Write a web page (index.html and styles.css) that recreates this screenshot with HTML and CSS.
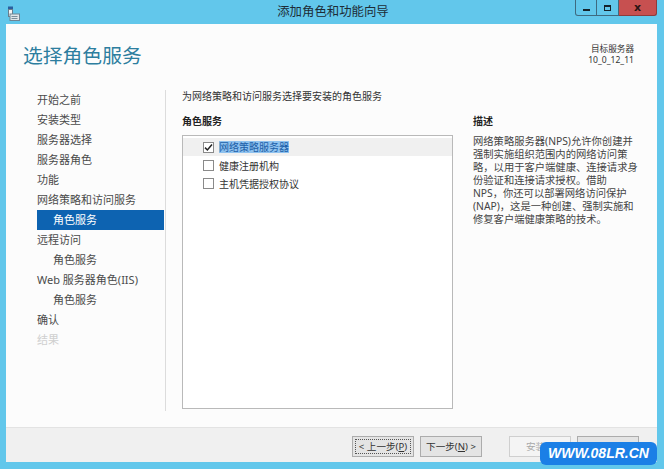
FILE: index.html
```html
<!DOCTYPE html>
<html>
    <head>
        <title>添加角色和功能向导</title>
        <link rel="stylesheet" href="styles.css">
    </head>
    <body>
        <div class="janela">
            <div class="titulo">
                <div class="titulo-icone">
                    <svg width="13" height="15" viewBox="0 0 13 15">
                        <rect x="1" y="0.5" width="5" height="3" fill="#2a5f9e"/>
                        <rect x="1.5" y="3.5" width="4" height="7" fill="#f4f4f4" stroke="#6a7d8c" stroke-width="1"/>
                        <rect x="3" y="8" width="9.5" height="6.5" fill="#dfe6ea" stroke="#6f8594" stroke-width="1"/>
                        <rect x="4.5" y="10" width="6" height="1" fill="#7a8e9b"/>
                        <rect x="4.5" y="12" width="6" height="1" fill="#7a8e9b"/>
                    </svg>
                </div>
                <div class="titulo-texto">添加角色和功能向导</div>
                <div class="titulo-botoes">
                    <span class="wbtn minimizar"><i></i></span>
                    <span class="wbtn maximizar"><i></i></span>
                    <span class="wbtn fechar">x</span>
                </div>
            </div>
            <div class="cliente">
                <div class="cabecalho">
                    <h1>选择角色服务</h1>
                    <div class="destino">目标服务器<br>10_0_12_11</div>
                </div>
                <div class="principal">
                    <ul class="menu">
                        <li>开始之前</li>
                        <li>安装类型</li>
                        <li>服务器选择</li>
                        <li>服务器角色</li>
                        <li>功能</li>
                        <li>网络策略和访问服务</li>
                        <li class="sub ativo">角色服务</li>
                        <li>远程访问</li>
                        <li class="sub">角色服务</li>
                        <li>Web 服务器角色(IIS)</li>
                        <li class="sub">角色服务</li>
                        <li>确认</li>
                        <li class="desativado">结果</li>
                    </ul>
                    <div class="conteudo">
                        <p class="intro">为网络策略和访问服务选择要安装的角色服务</p>
                        <div class="colunas">
                            <div>
                                <h2>角色服务</h2>
                                <div class="lista">
                                    <div class="linha hover">
                                        <span class="caixa marcada">
                                            <svg width="9" height="9" viewBox="0 0 9 9"><path d="M1 4.6 L3.4 7 L8 1.6" fill="none" stroke="#222" stroke-width="1.5"/></svg>
                                        </span>
                                        <span class="selecionado">网络策略服务器</span>
                                    </div>
                                    <div class="linha"><span class="caixa"></span><span>健康注册机构</span></div>
                                    <div class="linha"><span class="caixa"></span><span>主机凭据授权协议</span></div>
                                </div>
                            </div>
                            <div>
                                <h2>描述</h2>
                                <p class="descricao">网络策略服务器(NPS)允许你创建并<br>强制实施组织范围内的网络访问策<br>略，以用于客户端健康、连接请求身<br>份验证和连接请求授权。借助<br>NPS，你还可以部署网络访问保护<br>(NAP)，这是一种创建、强制实施和<br>修复客户端健康策略的技术。</p>
                            </div>
                        </div>
                    </div>
                </div>
                <div class="rodape">
                    <button class="botao padrao"><span>&lt; 上一步(<u>P</u>)</span></button>
                    <button class="botao">下一步(<u>N</u>) &gt;</button>
                    <button class="botao desligado longe">安装(I)</button>
                    <button class="botao">取消</button>
                </div>
            </div>
            <div class="marca">WWW.08LR.CN</div>
        </div>
    </body>
</html>
```

FILE: styles.css
```css
body{
    margin: 0;
    background-color: #62c7eb;
    font-family: "Noto Sans", "Noto Sans CJK SC", sans-serif;
}
.janela{
    position: relative;
    width: 664px;
    height: 469px;
    display: flex;
    flex-direction: column;
}
.titulo{
    height: 24px;
    display: grid;
    grid-template-columns: 1fr auto 1fr;
    align-items: start;
}
.titulo-icone{
    padding: 4px 0 0 7px;
}
.titulo-texto{
    font-size: 12.4px;
    line-height: 24px;
    color: #1d2c36;
    padding-left: 2px;
}
.titulo-botoes{
    display: flex;
    justify-content: flex-end;
    margin-right: 7px;
}
.wbtn{
    height: 16px;
    width: 22px;
    border: 1px solid #3e6a80;
    border-top: none;
    border-left-width: 0;
    display: flex;
    align-items: center;
    justify-content: center;
    box-sizing: border-box;
}
.minimizar{
    border-left-width: 1px;
    border-radius: 0 0 0 3px;
}
.minimizar i{
    width: 7px;
    height: 2px;
    margin-top: 4px;
    background-color: #15232b;
}
.maximizar i{
    width: 7px;
    height: 6px;
    border: 1px solid #15232b;
    border-top-width: 2px;
    box-sizing: border-box;
}
.fechar{
    width: 38px;
    background-color: #c75050;
    border-color: #8e3b3b;
    border-radius: 0 0 3px 0;
    font-family: "DejaVu Sans", sans-serif;
    font-weight: bold;
    font-size: 11px;
    color: #2b1414;
}
.cliente{
    flex: 1;
    margin: 0 7px 7px 6px;
    background-color: #fcfcfc;
    display: flex;
    flex-direction: column;
}
.cabecalho{
    height: 66px;
    display: flex;
    justify-content: space-between;
    align-items: flex-start;
    box-sizing: border-box;
}
h1{
    margin: 18px 0 0 17px;
    font-size: 19.8px;
    line-height: 28px;
    font-weight: normal;
    color: #2d7e9f;
}
.destino{
    margin: 20px 23px 0 0;
    text-align: right;
    font-size: 8.6px;
    line-height: 10.5px;
    color: #333;
}
.principal{
    flex: 1;
    display: flex;
    align-items: flex-start;
}
.menu{
    list-style: none;
    margin: 0;
    padding: 0 1px 0 31px;
    width: 160px;
    height: 321px;
    box-sizing: border-box;
    border-right: 1px solid #dcdcdc;
}
.menu li{
    font-size: 11px;
    line-height: 20px;
    height: 20px;
    color: #4a4a4a;
    white-space: nowrap;
}
.menu .sub{
    padding-left: 16px;
}
.menu .ativo{
    background-color: #0d63b1;
    color: white;
}
.menu .desativado{
    color: #cfcfcf;
}
.conteudo{
    padding-left: 16px;
}
.intro{
    margin: 0;
    font-size: 10px;
    line-height: 12px;
    color: #333;
}
.colunas{
    margin-top: 12px;
    display: grid;
    grid-template-columns: 271px 172px;
    gap: 20px;
}
h2{
    margin: 0;
    font-size: 10px;
    line-height: 14px;
    color: #222;
}
.lista{
    margin-top: 7px;
    height: 274px;
    box-sizing: border-box;
    border: 1px solid #b9b9b9;
    background-color: white;
    padding-top: 2px;
}
.linha{
    height: 18px;
    display: flex;
    align-items: center;
    padding-left: 20px;
    font-size: 10px;
    color: #333;
}
.linha.hover{
    background-color: #f0f0f0;
}
.caixa{
    width: 11px;
    height: 11px;
    box-sizing: border-box;
    border: 1px solid #8a8a8a;
    background-color: white;
    margin-right: 5px;
    display: flex;
    align-items: center;
    justify-content: center;
}
.selecionado{
    background-color: #8fc2ef;
    color: #1d5fa8;
    line-height: 12px;
}
.descricao{
    margin: 7px 0 0 0;
    font-size: 10.3px;
    line-height: 13px;
    color: #444;
    white-space: nowrap;
}
.rodape{
    height: 34px;
    border-top: 1px solid #e3e3e3;
    background-color: #f0f0f0;
    display: flex;
    justify-content: flex-end;
    align-items: center;
    padding-right: 18px;
    gap: 6px;
}
.botao{
    width: 62px;
    height: 21px;
    padding: 0;
    font-family: "Noto Sans", "Noto Sans CJK SC", sans-serif;
    font-size: 9.6px;
    color: #333;
    background-color: #e4e4e4;
    border: 1px solid #acacac;
    margin-top: 2px;
}
.botao.padrao{
    padding: 2px;
}
.botao.padrao span{
    display: block;
    border: 1px dotted #555;
    line-height: 13px;
}
.botao.desligado{
    background-color: #f4f4f4;
    border-color: #cfcfcf;
    color: #a8a8a8;
}
.botao.longe{
    margin-left: 21px;
}
.marca{
    position: absolute;
    left: 540px;
    top: 442px;
    width: 117px;
    height: 23px;
    border-radius: 6px;
    background-color: #1b7fe6;
    color: white;
    font-family: "Liberation Sans", sans-serif;
    font-weight: bold;
    font-style: italic;
    font-size: 14px;
    line-height: 23px;
    text-align: center;
}
```
